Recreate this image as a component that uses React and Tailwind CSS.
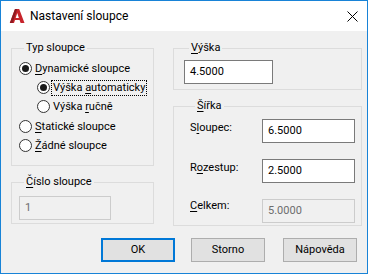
import React from 'react'

const font = { fontFamily: 'Roboto, "Liberation Sans", sans-serif' }

const Radio = ({ checked }) => (
  <span className="w-[13px] h-[13px] rounded-full border border-[#333333] bg-white flex items-center justify-center shrink-0">
    {checked && <span className="w-[7px] h-[7px] rounded-full bg-[#1a1a1a]" />}
  </span>
)

const RadioRow = ({ checked, children, indent, focus, className = '' }) => (
  <div className={`h-[19px] flex items-center whitespace-nowrap ${indent ? 'pl-[18px]' : ''} ${className}`}>
    <Radio checked={checked} />
    <span
      className={`ml-[2px] leading-[14px] px-[1px] ${
        focus ? 'outline outline-1 outline-dotted outline-black' : ''
      }`}
    >
      {children}
    </span>
  </div>
)

const Legend = ({ children }) => (
  <legend className="ml-[5px] px-[2px] leading-[16px]">{children}</legend>
)

const Field = ({ value, width, disabled, className = '' }) => (
  <div
    className={`h-[24px] flex items-center pl-[5px] ${
      disabled
        ? 'border border-[#cccccc] bg-[#f0f0f0] text-[#6d6d6d]'
        : 'border border-[#7a7a7a] bg-white text-black'
    } ${className}`}
    style={{ width }}
  >
    {value}
  </div>
)

const Btn = ({ children, primary, className = '' }) => (
  <button
    type="button"
    className={`w-[74px] h-[24px] bg-[#e1e1e1] flex items-center justify-center ${
      primary ? 'border-2 border-[#0078d7]' : 'border border-[#adadad]'
    } ${className}`}
  >
    {children}
  </button>
)

const U = ({ children }) => <span className="underline underline-offset-2">{children}</span>

const Logo = () => (
  <svg width="16" height="16" viewBox="0 0 16 16">
    <path d="M6 1 L10.2 1 L15.5 15 L11.6 15 L10.6 12 L6 12 L5 15 L0.8 15 Z" fill="#c7242b" />
    <path d="M6 1 L8.2 1 L3.6 15 L0.8 15 Z" fill="#8e1a20" />
    <path d="M8.3 5 L9.9 10 L6.7 10 Z" fill="#ffffff" />
  </svg>
)

export default function App() {
  return (
    <div
      className="w-[368px] h-[274px] border border-[#1883d7] bg-[#f0f0f0] flex flex-col text-[11px] text-black overflow-hidden"
      style={font}
    >
      <div className="h-[30px] bg-white flex items-center shrink-0">
        <div className="ml-[8px]">
          <Logo />
        </div>
        <span className="ml-[5px] text-[12px]">Nastavení sloupce</span>
        <svg className="ml-auto mr-[9px]" width="11" height="11" viewBox="0 0 11 11">
          <path d="M0.5 0.5 L10.5 10.5 M10.5 0.5 L0.5 10.5" stroke="#000" strokeWidth="1" />
        </svg>
      </div>

      <div className="flex-1 flex flex-col pl-[10px] pr-[5px] pt-[9px]">
        <div className="flex">
          <div className="w-[143px] flex flex-col">
            <fieldset className="border border-[#dcdcdc] pl-[7px] pt-[3px] pb-[10px]">
              <Legend>Typ sloupce</Legend>
              <RadioRow checked>
                <U>D</U>ynamické sloupce
              </RadioRow>
              <RadioRow checked indent focus>
                Výška <U>a</U>utomaticky
              </RadioRow>
              <RadioRow indent>
                Výška <U>r</U>učně
              </RadioRow>
              <RadioRow className="mt-[1px]">
                <U>S</U>tatické sloupce
              </RadioRow>
              <RadioRow>
                <U>Ž</U>ádné sloupce
              </RadioRow>
            </fieldset>
            <fieldset className="mt-[8px] border border-[#dcdcdc] pl-[7px] pt-[6px] pb-[3px]">
              <Legend>
                <U>Č</U>íslo sloupce
              </Legend>
              <Field value="1" width={92} disabled />
            </fieldset>
          </div>

          <div className="ml-[19px] w-[189px] flex flex-col">
            <fieldset className="border border-[#dcdcdc] pl-[10px] pt-[4px] pb-[5px]">
              <Legend>
                <U>V</U>ýška
              </Legend>
              <Field value="4.5000" width={89} className="h-[23px]" />
            </fieldset>
            <fieldset className="mt-[8px] border border-[#dcdcdc] pl-[16px] pt-[5px] pb-[2px]">
              <Legend>
                <U>Š</U>ířka
              </Legend>
              <div className="flex items-start">
                <span className="w-[72px] leading-[17px]">
                  S<U>l</U>oupec:
                </span>
                <Field value="6.5000" width={93} />
              </div>
              <div className="flex items-start mt-[16px]">
                <span className="w-[72px] leading-[17px]">
                  R<U>o</U>zestup:
                </span>
                <Field value="2.5000" width={93} />
              </div>
              <div className="flex items-start mt-[16px]">
                <span className="w-[72px] leading-[13px]">
                  <U>C</U>elkem:
                </span>
                <Field value="5.0000" width={93} disabled className="h-[23px]" />
              </div>
            </fieldset>
          </div>
        </div>

        <div className="flex justify-end mt-[12px] mr-[5px]">
          <Btn primary>OK</Btn>
          <Btn className="ml-[16px]">Storno</Btn>
          <Btn className="ml-[18px]">Nápověda</Btn>
        </div>
      </div>
    </div>
  )
}
